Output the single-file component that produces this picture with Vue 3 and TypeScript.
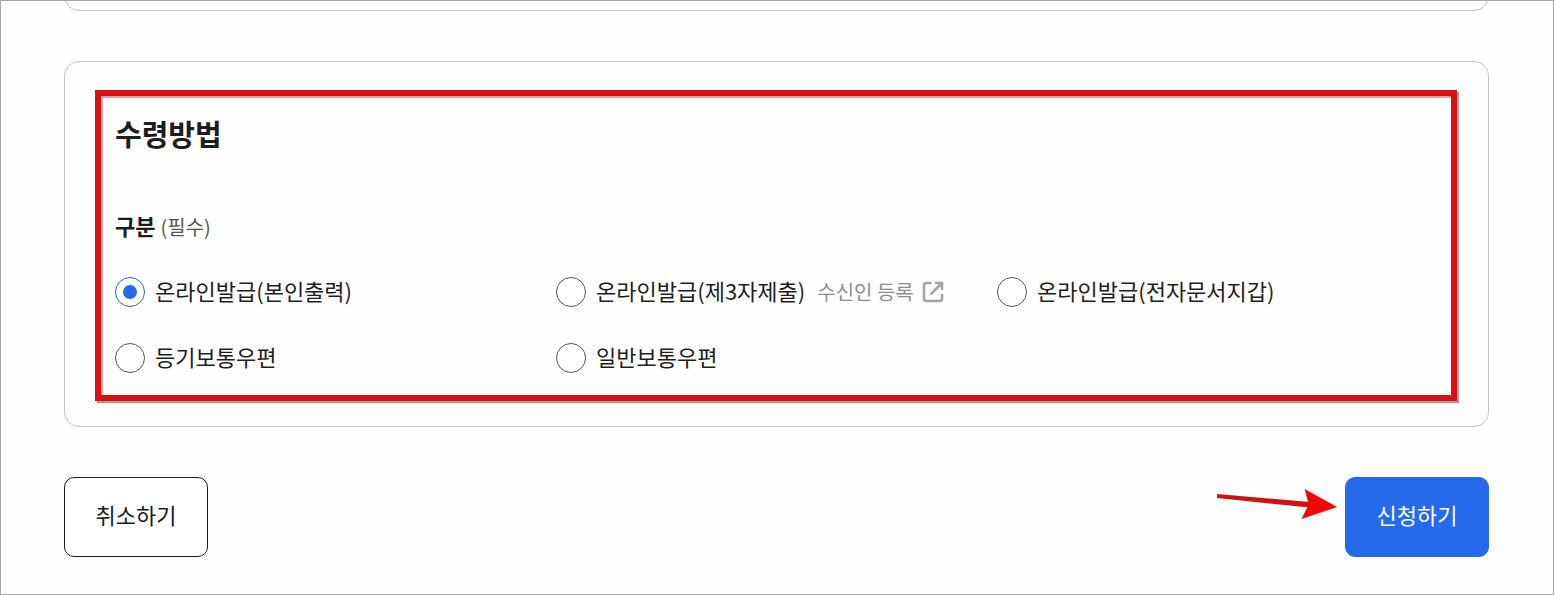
<script setup lang="ts">
import { ref } from 'vue'

interface Method {
  id: string
  label: string
  link?: string
}

const methods: Method[] = [
  { id: 'self', label: '온라인발급(본인출력)' },
  { id: 'third', label: '온라인발급(제3자제출)', link: '수신인 등록' },
  { id: 'wallet', label: '온라인발급(전자문서지갑)' },
  { id: 'registered', label: '등기보통우편' },
  { id: 'regular', label: '일반보통우편' },
]

const selected = ref<string>('self')
</script>

<template>
  <main class="page">
    <div class="previous"></div>

    <section class="card">
      <h2 class="title">수령방법</h2>
      <fieldset class="group">
        <legend class="legend">구분 <span class="required">(필수)</span></legend>
        <div class="options">
          <div v-for="m in methods" :key="m.id" class="option">
            <input :id="m.id" v-model="selected" class="radio" type="radio" name="method" :value="m.id" />
            <label class="label" :for="m.id">{{ m.label }}</label>
            <a v-if="m.link" class="link" href="#">
              {{ m.link }}
              <svg class="external" viewBox="0 0 22 22" aria-hidden="true">
                <path d="M9.5 2H4.5Q2 2 2 4.5V17.5Q2 20 4.5 20H17.5Q20 20 20 17.5V13M13 2H20V9M20 2L8.5 13.5" />
              </svg>
            </a>
          </div>
        </div>
      </fieldset>
      <div class="highlight"></div>
    </section>

    <div class="actions">
      <button class="button cancel" type="button">취소하기</button>
      <div class="submit-wrap">
        <button class="button submit" type="button">신청하기</button>
        <svg class="arrow" viewBox="0 0 120 30" aria-hidden="true">
          <path d="M0 5L93 13L92 18.5L0 9Z" fill="#cc1414" />
          <path d="M88 0.5L119.5 18L85 29.5L92 15.5Z" fill="#fa0000" stroke="#b82020" stroke-width="0.6" />
        </svg>
      </div>
    </div>
  </main>
</template>

<style>
body {
  margin: 0;
}
</style>

<style scoped>
.page {
  box-sizing: border-box;
  min-height: 100vh;
  padding: 0 64px 37px 63px;
  overflow: hidden;
  border: 1px solid #a6a6a6;
  background: #fefefe;
  color: #1d1d1d;
  font-family: "Noto Sans CJK KR", "Noto Sans", sans-serif;
  font-size: 22px;
  line-height: 34px;
}

.previous {
  height: 40px;
  margin-top: -32px;
  border: 1px solid #c6c6c6;
  border-radius: 15px;
}

.card {
  position: relative;
  margin-top: 50px;
  padding: 48px 50px 50px;
  border: 1px solid #c6c6c6;
  border-radius: 15px;
}

.title {
  margin: 0 0 52px;
  font-size: 29px;
  line-height: 46px;
  font-weight: 700;
}

.group {
  min-width: 0;
  margin: 0;
  padding: 0;
  border: 0;
}

.legend {
  padding: 0;
  font-weight: 700;
}

.required {
  color: #555;
  font-size: 20px;
  line-height: 20px;
  font-weight: 400;
}

.options {
  display: grid;
  grid-template-columns: repeat(3, 1fr);
  row-gap: 30px;
  margin-top: 32px;
}

.option {
  display: flex;
  align-items: center;
  gap: 10px;
  height: 36px;
  white-space: nowrap;
}

.label {
  padding-bottom: 4px;
}

.radio {
  display: grid;
  place-items: center;
  flex: none;
  box-sizing: border-box;
  width: 30px;
  height: 30px;
  margin: 0;
  border: 1px solid #555;
  border-radius: 50%;
  background: #fff;
  appearance: none;
}

.radio:checked {
  border-color: #2e64b0;
}

.radio:checked::before {
  width: 14px;
  height: 14px;
  border-radius: 50%;
  background: #256aea;
  content: "";
}

.link {
  display: flex;
  align-items: center;
  gap: 8px;
  margin-left: 2px;
  color: #8e8e8e;
  font-size: 20px;
  text-decoration: none;
}

.external {
  width: 22px;
  height: 22px;
  fill: none;
  stroke: #a3a3a3;
  stroke-width: 2.5;
}

.highlight {
  position: absolute;
  inset: 28px 31px 25px 30px;
  border: 6px solid #d81114;
  box-shadow: 2px 2px 1px #b09a9a, inset 2px 2px 1px #c9a5a5;
  pointer-events: none;
}

.actions {
  display: flex;
  justify-content: space-between;
  margin-top: 50px;
}

.submit-wrap {
  position: relative;
}

.button {
  display: block;
  min-width: 144px;
  height: 80px;
  padding: 0 30px 6px;
  border: 1px solid #1d1d1d;
  border-radius: 10px;
  background: #fff;
  color: #101c24;
  font: inherit;
}

.submit {
  border-color: #256aea;
  background: #256aea;
  color: #fff;
}

.arrow {
  position: absolute;
  top: 12px;
  right: calc(100% + 8px);
  width: 120px;
  height: 30px;
}
</style>
